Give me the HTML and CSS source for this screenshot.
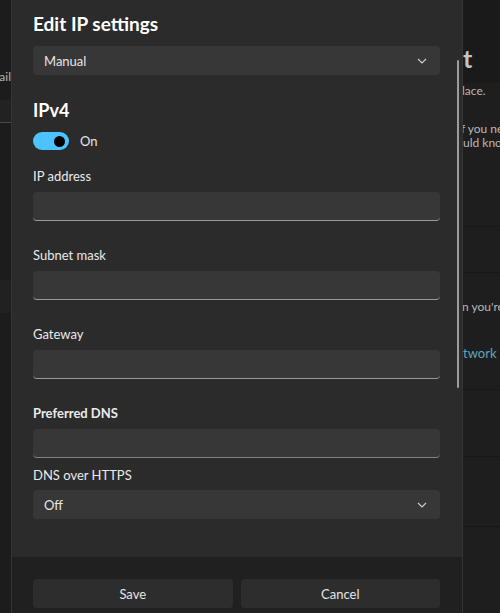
FILE: index.html
```html
<!DOCTYPE html>
<html lang="en">
<head>
  <meta charset="UTF-8" />
  <meta name="viewport" content="width=device-width, initial-scale=1.0"/>
  <title>Edit IP settings</title>
  <link rel="stylesheet" href="styles.css">
</head>
<body>

  <!-- settings page dimmed behind the dialog -->
  <div class="backdrop">
    <nav class="nav">
      <div class="nav-account"><span>jordan@mail</span></div>
      <div class="nav-search"></div>
      <div class="nav-item nav-item-active"></div>
    </nav>

    <main class="main">
      <div class="strip">
        <div class="strip-head">
          <h2 class="page-title">t</h2>
        </div>
        <div class="card card-profile">
          <p class="line line-place">lace.</p>
          <p class="line line-if">f you ne</p>
          <p class="line">uld know</p>
        </div>
        <div class="card card-firewall"></div>
        <div class="card card-metered">
          <p class="line line-metered">n you're</p>
          <p class="line line-link">twork</p>
        </div>
        <div class="card card-ip"></div>
        <div class="card card-dns"></div>
        <div class="card"></div>
      </div>
    </main>
  </div>

  <div class="dialog">
    <div class="dialog-body">
      <h1 class="dialog-title">Edit IP settings</h1>

      <div class="select">
        <span>Manual</span>
        <svg class="chevron" width="10" height="6" viewBox="0 0 10 6"><path d="M1 1l4 4 4-4" fill="none" stroke="#cfcfcf" stroke-width="1.1"/></svg>
      </div>

      <h2 class="section-title">IPv4</h2>
      <div class="toggle-row">
        <span class="toggle"><span class="toggle-knob"></span></span>
        <span class="toggle-label">On</span>
      </div>

      <div class="field">
        <label for="ip">IP address</label>
        <input type="text" id="ip" />
      </div>
      <div class="field">
        <label for="mask">Subnet mask</label>
        <input type="text" id="mask" />
      </div>
      <div class="field">
        <label for="gateway">Gateway</label>
        <input type="text" id="gateway" />
      </div>
      <div class="field field-strong">
        <label for="dns">Preferred DNS</label>
        <input type="text" id="dns" />
      </div>
      <div class="field field-tight">
        <label>DNS over HTTPS</label>
        <div class="select">
          <span>Off</span>
          <svg class="chevron" width="10" height="6" viewBox="0 0 10 6"><path d="M1 1l4 4 4-4" fill="none" stroke="#cfcfcf" stroke-width="1.1"/></svg>
        </div>
      </div>

      <div class="scrollbar"></div>
    </div>

    <div class="dialog-footer">
      <button class="btn">Save</button>
      <button class="btn">Cancel</button>
    </div>
  </div>

</body>
</html>
```

FILE: styles.css
```css
html, body {
  margin: 0;
  padding: 0;
  height: 100%;
}

body {
  background: #1c1c1c;
  color: white;
  font-family: Lato, "Noto Sans", sans-serif;
  overflow: hidden;
  position: relative;
}

/* backdrop page */

.backdrop {
  display: flex;
  height: 100%;
}

.nav {
  width: 11px;
  overflow: hidden;
  background: #1c1c1c;
}

.nav-account {
  display: flex;
  justify-content: flex-end;
  margin-top: 69px;
  height: 16px;
  font-size: 12px;
  line-height: 16px;
  color: #b5b5b5;
  white-space: nowrap;
}

.nav-search {
  margin-top: 15px;
  height: 22px;
  background: #222;
  border-bottom: 1px solid #4a4a4a;
}

.nav-item {
  height: 33px;
}

.nav-item-active {
  margin-top: 157px;
  background: #212121;
}

.main {
  flex: 1;
  display: flex;
  justify-content: flex-end;
  background: #1b1b1b;
}

.strip {
  width: 37px;
  overflow: hidden;
  display: flex;
  flex-direction: column;
}

.strip-head {
  height: 83px;
  background: #1a1a1a;
}

.page-title {
  margin: 42px 0 0;
  font-size: 25px;
  line-height: 32px;
  font-weight: 700;
  color: #c4c4c4;
}

.card {
  background: #1e1e1e;
  border-top: 1px solid #171717;
}

.card:last-child { flex: 1; }

.card-profile { height: 143px; border-top: none; }
.card-firewall { height: 45px; }
.card-metered { height: 116px; }
.card-ip { height: 66px; }
.card-dns { height: 69px; }

.line {
  margin: 0;
  font-size: 12px;
  line-height: 15px;
  color: #b8b8b8;
  white-space: nowrap;
}

.line-place { margin-left: -1px; }
.line-if { margin-top: 24px; margin-left: -2px; line-height: 13px; }
.line-metered { margin-top: 26px; margin-left: -1px; }
.line-link { margin-top: 32px; color: #5fa8bb; font-size: 13px; }

/* dialog */

.dialog {
  position: absolute;
  left: 11px;
  top: 0;
  bottom: 0;
  width: 452px;
  box-sizing: border-box;
  display: flex;
  flex-direction: column;
  background: #2b2b2b;
  border-left: 1px solid #343434;
  border-right: 1px solid #343434;
}

.dialog-body {
  position: relative;
  height: 557px;
  box-sizing: border-box;
  padding: 10px 22px 0 21px;
}

.dialog-title {
  margin: 0 0 8px;
  font-size: 19px;
  line-height: 28px;
  font-weight: 700;
}

.select {
  height: 29px;
  box-sizing: border-box;
  display: flex;
  align-items: center;
  justify-content: space-between;
  padding: 0 13px 0 11px;
  background: #373737;
  border-radius: 4px;
  font-size: 13px;
  color: #e6e6e6;
}

.chevron {
  margin-top: 1px;
}

.section-title {
  margin: 23px 0 10px;
  font-size: 18px;
  line-height: 24px;
  font-weight: 700;
}

.toggle-row {
  display: flex;
  align-items: center;
  gap: 11px;
}

.toggle {
  width: 36px;
  height: 18px;
  box-sizing: border-box;
  display: flex;
  align-items: center;
  justify-content: flex-end;
  padding-right: 4px;
  background: #4cc2ff;
  border-radius: 9px;
}

.toggle-knob {
  width: 11px;
  height: 11px;
  border-radius: 50%;
  background: #000;
}

.toggle-label {
  font-size: 13px;
  color: #e6e6e6;
}

.field {
  display: flex;
  flex-direction: column;
  gap: 7px;
  margin-top: 17px;
}

.field + .field {
  margin-top: 25px;
}

.field label {
  font-size: 13px;
  line-height: 18px;
  color: #eaeaea;
}

.field input {
  height: 29px;
  box-sizing: border-box;
  margin: 0;
  padding: 0 11px;
  border: none;
  border-bottom: 1px solid #9a9a9a;
  border-radius: 4px;
  background: #373737;
  color: white;
  font: inherit;
  font-size: 13px;
  outline: none;
}

.field-strong label {
  font-weight: 700;
}

.field-strong input {
  border-bottom-color: #838383;
}

.field.field-tight {
  margin-top: 8px;
  gap: 6px;
}

.scrollbar {
  position: absolute;
  right: 3px;
  top: 60px;
  width: 2px;
  height: 328px;
  border-radius: 1px;
  background: #9c9c9c;
}

.dialog-footer {
  flex: 1;
  display: grid;
  grid-template-columns: 1fr 1fr;
  gap: 8px;
  align-items: start;
  padding: 22px 22px 0 21px;
  background: #202020;
}

.btn {
  height: 29px;
  border: none;
  border-radius: 4px;
  background: #2d2d2d;
  color: #e6e6e6;
  font: inherit;
  font-size: 13px;
  cursor: pointer;
}
```
